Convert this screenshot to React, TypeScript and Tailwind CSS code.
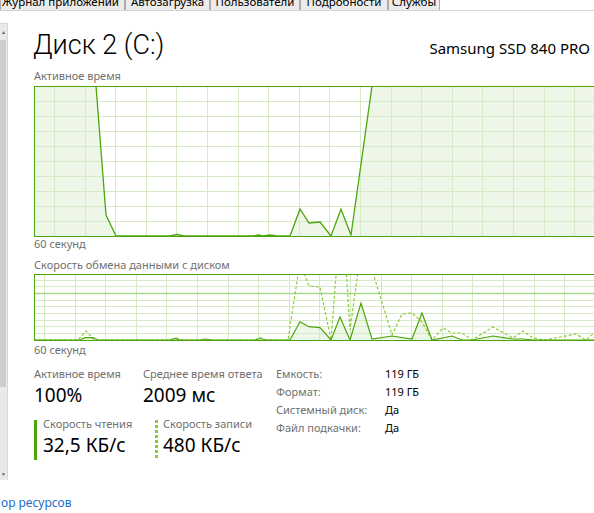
import React from 'react';

const GREEN = '#4ca60b';
const LIGHT = '#8ccc3c';
const GRID = '#d6eac7';
const FILL = '#eef6e7';
const W = 564;

type Pt = [number, number];

const toLocal = (pts: Pt[], ox: number, oy: number) =>
  pts.map(([x, y]) => `${x - ox},${y - oy}`).join(' ');

// active time, global page coords
const active: Pt[] = [
  [34, 86], [96, 86], [106, 215], [116, 236], [170, 236], [177, 234.5], [184, 236],
  [253, 236], [258, 235], [263, 236], [270, 235], [277, 236], [290, 236], [300, 209],
  [309, 223], [320, 222], [331, 236], [341, 209], [351, 235], [372, 86], [600, 86],
];

const readPts: Pt[] = [
  [34, 340], [80, 340], [85, 337.7], [93, 337.7], [98, 340], [170, 340], [175, 338.5],
  [180, 340], [200, 340], [205, 339], [212, 340], [255, 340], [260, 338.5], [266, 340],
  [290, 340], [300, 321.7], [309, 326.7], [320, 327.7], [331, 340], [340, 317], [350, 340],
  [361, 303], [372, 339], [392, 336], [412, 339], [422, 313], [432, 340], [452, 336],
  [462, 340], [472, 340], [493, 336], [513, 339], [523, 339], [533, 340], [600, 340],
];

const writePts: Pt[] = [
  [34, 340], [78, 340], [86, 331], [94, 340], [170, 340], [176, 338], [182, 340],
  [255, 340], [260, 337.5], [266, 340], [288, 340], [300, 262], [309, 286], [320, 287],
  [331, 340], [338, 250], [345, 250], [350, 330], [361, 250], [366, 250], [392, 335],
  [402, 314], [412, 313], [422, 322], [432, 340], [443, 328], [452, 333], [462, 333],
  [472, 340], [493, 327], [513, 338], [523, 331], [533, 338], [545, 340], [576, 334],
  [586, 340], [594, 333], [600, 330],
];

function GridLines({ h, rows, offset, highlight }: { h: number; rows: number[]; offset: number; highlight?: number }) {
  const cols: number[] = [];
  for (let x = offset; x < W; x += 30.6) cols.push(Math.round(x) + 0.5);
  return (
    <g>
      {rows.map((y) => (
        <line key={'r' + y} x1={0} x2={W} y1={y + 0.5} y2={y + 0.5} stroke={GRID} strokeWidth={1} />
      ))}
      {cols.map((x) => (
        <line key={'c' + x} x1={x} x2={x} y1={0} y2={h} stroke={GRID} strokeWidth={1} />
      ))}
      {highlight !== undefined && (
        <line x1={0} x2={W} y1={highlight} y2={highlight} stroke="#a9d88b" strokeWidth={1.5} />
      )}
    </g>
  );
}

function ActiveChart() {
  const line = toLocal(active, 34, 86);
  const fill = `${line} 566,150 0,150`;
  return (
    <svg width={W} height={151} className="block">
      <polygon points={fill} fill={FILL} />
      <GridLines h={151} rows={[15, 30, 45, 60, 75, 90, 105, 120, 135]} offset={20} />
      <polyline points={line} fill="none" stroke={GREEN} strokeWidth={1.3} />
      <rect x={0.5} y={0.5} width={W} height={150} fill="none" stroke={GREEN} />
    </svg>
  );
}

function TransferChart() {
  const read = toLocal(readPts, 34, 274);
  const write = toLocal(writePts, 34, 274);
  return (
    <svg width={W} height={67} className="block">
      <polygon points={`${read} 566,66 0,66`} fill={FILL} />
      <GridLines h={67} rows={[6, 12, 19, 26, 32, 39, 46, 52, 59]} offset={10} highlight={19.5} />
      <polyline points={write} fill="none" stroke={LIGHT} strokeWidth={1.2} strokeDasharray="3 2" />
      <polyline points={read} fill="none" stroke={GREEN} strokeWidth={1.2} />
      <rect x={0.5} y={0.5} width={W} height={66} fill="none" stroke={GREEN} />
    </svg>
  );
}

const tabs = [
  { label: 'Журнал приложений', w: 'w-[125px] justify-end pr-[5px]' },
  { label: 'Автозагрузка', w: 'w-[85px] justify-center' },
  { label: 'Пользователи', w: 'w-[90px] justify-center' },
  { label: 'Подробности', w: 'w-[88px] justify-center' },
  { label: 'Службы', w: 'w-[52px] justify-center' },
];

const props = [
  ['Емкость:', '119 ГБ'],
  ['Формат:', '119 ГБ'],
  ['Системный диск:', 'Да'],
  ['Файл подкачки:', 'Да'],
];

export default function App() {
  return (
    <div className="w-[594px] h-[513px] overflow-hidden bg-white flex flex-col font-['Noto_Sans',sans-serif] text-black">
      {/* tab strip, mostly scrolled off the top */}
      <div className="h-[11px] shrink-0 flex items-end overflow-hidden border-b border-[#d4d4d4]">
        {tabs.map((t) => (
          <div
            key={t.label}
            className={`${t.w} h-[17px] shrink-0 flex items-center border border-b-0 border-[#acacac] bg-[#ececec] text-[11.5px] leading-[14px] text-black whitespace-nowrap overflow-hidden`}
          >
            {t.label}
          </div>
        ))}
      </div>

      <div className="h-[484px] shrink-0 flex">
        {/* left scroller */}
        <div className="w-[8px] shrink-0 mt-[12px] h-[457px] flex flex-col border-t border-r border-[#d8d8d8] bg-[#e9e9e9]">
          <div className="h-[16px] flex items-center justify-center text-[5px] leading-none text-[#606060]">▲</div>
          <div className="h-[347px] w-[6px] bg-[#cdcdcd]" />
          <div className="flex-1" />
          <div className="h-[12px] flex items-center justify-center text-[5px] leading-none text-[#606060]">▼</div>
        </div>

        <div className="ml-[26px] flex-1 min-w-0 flex flex-col">
          <div className="mt-[17px] flex items-baseline justify-between pr-[4px]">
            <div className="-ml-[1px] text-[27px] leading-[34px] font-light font-['Roboto',sans-serif]">Диск 2 (C:)</div>
            <div className="text-[15px] leading-[20px]">Samsung SSD 840 PRO</div>
          </div>

          <div className="mt-[7px] text-[11px] leading-[14px] text-[#707070]">Активное время</div>
          <div className="mt-[3px]">
            <ActiveChart />
          </div>
          <div className="text-[11px] leading-[14px] text-[#707070]">60 секунд</div>

          <div className="mt-[7px] text-[11px] leading-[14px] text-[#707070]">Скорость обмена данными с диском</div>
          <div className="mt-[2px]">
            <TransferChart />
          </div>
          <div className="mt-[2px] text-[11px] leading-[14px] text-[#707070]">60 секунд</div>

          <div className="flex items-start">
            <div className="w-[242px] shrink-0 mt-[9px] flex flex-col">
              <div className="flex">
                <div className="w-[109px] shrink-0">
                  <div className="text-[11px] leading-[16px] text-[#707070]">Активное время</div>
                  <div className="mt-[1px] text-[19px] leading-[24px]">100%</div>
                </div>
                <div>
                  <div className="text-[11px] leading-[16px] text-[#707070]">Среднее время ответа</div>
                  <div className="mt-[1px] text-[19px] leading-[24px]">2009 мс</div>
                </div>
              </div>
              <div className="mt-[9px] flex">
                <div className="w-[121px] shrink-0 flex">
                  <div className="mt-[4px] w-[3px] h-[40px] bg-[#4ca60b]" />
                  <div className="ml-[6px]">
                    <div className="text-[11px] leading-[16px] text-[#707070]">Скорость чтения</div>
                    <div className="mt-[1px] text-[19px] leading-[24px]">32,5 КБ/с</div>
                  </div>
                </div>
                <div className="flex">
                  <div className="mt-[4px] w-[3px] h-[40px] bg-[repeating-linear-gradient(to_bottom,#8ccc3c_0px,#8ccc3c_3px,transparent_3px,transparent_5px)]" />
                  <div className="ml-[5px]">
                    <div className="text-[11px] leading-[16px] text-[#707070]">Скорость записи</div>
                    <div className="mt-[1px] text-[19px] leading-[24px]">480 КБ/с</div>
                  </div>
                </div>
              </div>
            </div>

            <div className="mt-[8px] flex flex-col">
              {props.map(([k, v]) => (
                <div key={k} className="flex text-[11px] leading-[18px]">
                  <div className="w-[109px] shrink-0 text-[#707070]">{k}</div>
                  <div>{v}</div>
                </div>
              ))}
            </div>
          </div>
        </div>
      </div>

      <div className="pl-[1px] text-[12px] leading-[16px] text-[#1a6cc8]">ор ресурсов</div>
    </div>
  );
}
